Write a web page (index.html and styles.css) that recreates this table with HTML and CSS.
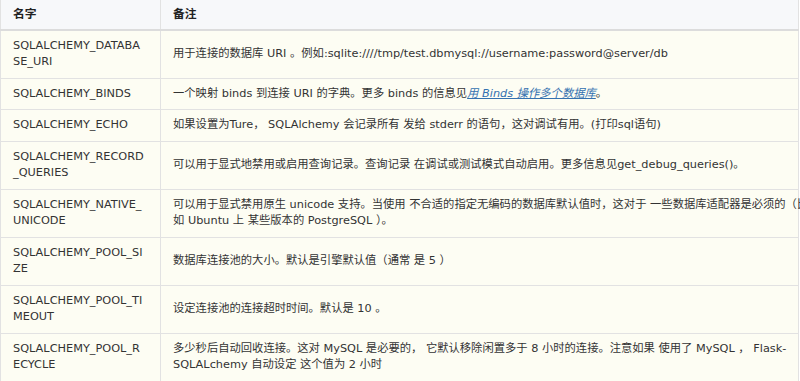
FILE: index.html
```html
<!DOCTYPE html>
<html lang="zh">
<head>
<meta charset="utf-8">
<title>配置键</title>
<link rel="stylesheet" href="styles.css">
</head>
<body>
<table class="config">
  <colgroup>
    <col class="col-name">
    <col class="col-note">
  </colgroup>
  <thead>
    <tr><th>名字</th><th>备注</th></tr>
  </thead>
  <tbody>
    <tr><td class="key">SQLALCHEMY_DATABASE_URI</td><td>用于连接的数据库 URI 。例如:sqlite:////tmp/test.dbmysql://username:password@server/db</td></tr>
    <tr><td class="key">SQLALCHEMY_BINDS</td><td>一个映射 binds 到连接 URI 的字典。更多 binds 的信息见<a class="ref" href="#binds">用 Binds 操作多个数据库</a>。</td></tr>
    <tr><td class="key">SQLALCHEMY_ECHO</td><td>如果设置为Ture， SQLAlchemy 会记录所有 发给 stderr 的语句，这对调试有用。(打印sql语句)</td></tr>
    <tr><td class="key">SQLALCHEMY_RECORD_QUERIES</td><td>可以用于显式地禁用或启用查询记录。查询记录 在调试或测试模式自动启用。更多信息见get_debug_queries()。</td></tr>
    <tr><td class="key">SQLALCHEMY_NATIVE_UNICODE</td><td><span class="nowrap">可以用于显式禁用原生 unicode 支持。当使用 不合适的指定无编码的数据库默认值时，这对于 一些数据库适配器是必须的（比</span><br>如 Ubuntu 上 某些版本的 PostgreSQL ）。</td></tr>
    <tr><td class="key">SQLALCHEMY_POOL_SIZE</td><td>数据库连接池的大小。默认是引擎默认值（通常 是 5 ）</td></tr>
    <tr><td class="key">SQLALCHEMY_POOL_TIMEOUT</td><td>设定连接池的连接超时时间。默认是 10 。</td></tr>
    <tr><td class="key">SQLALCHEMY_POOL_RECYCLE</td><td>多少秒后自动回收连接。这对 MySQL 是必要的， 它默认移除闲置多于 8 小时的连接。注意如果 使用了 MySQL ， Flask-SQLALchemy 自动设定 这个值为 2 小时</td></tr>
  </tbody>
</table>
</body>
</html>
```
FILE: styles.css
```css
html, body {
  margin: 0;
  padding: 0;
  background: #ffffff;
  overflow: hidden;
}

.config {
  width: 799px;
  table-layout: fixed;
  border-collapse: collapse;
  font-family: "DejaVu Sans", "Noto Sans CJK SC", sans-serif;
  font-size: 11.3px;
  line-height: 16.5px;
  color: #333333;
  border-left: 1px solid #e2e2e2;
  border-right: 1px solid #e2e2e2;
}

.col-name {
  width: 160px;
}

.config th,
.config td {
  padding: 7px 12px;
  border: 1px solid #e2e2e2;
  text-align: left;
  vertical-align: middle;
}

.config th {
  background: #f7f8fa;
  font-size: 11.8px;
  font-weight: bold;
  color: #222222;
  padding-top: 6px;
  padding-bottom: 6px;
  border-top: none;
  border-bottom: 2px solid #dcdcdc;
}

.config td {
  background: #fdfdf3;
}

.config td.key {
  padding-right: 16px;
  word-break: break-all;
}

.config td:last-child {
  padding-right: 2px;
}

.ref {
  color: #3471b0;
  font-style: italic;
  text-decoration: underline;
}

.nowrap {
  white-space: nowrap;
}
```
